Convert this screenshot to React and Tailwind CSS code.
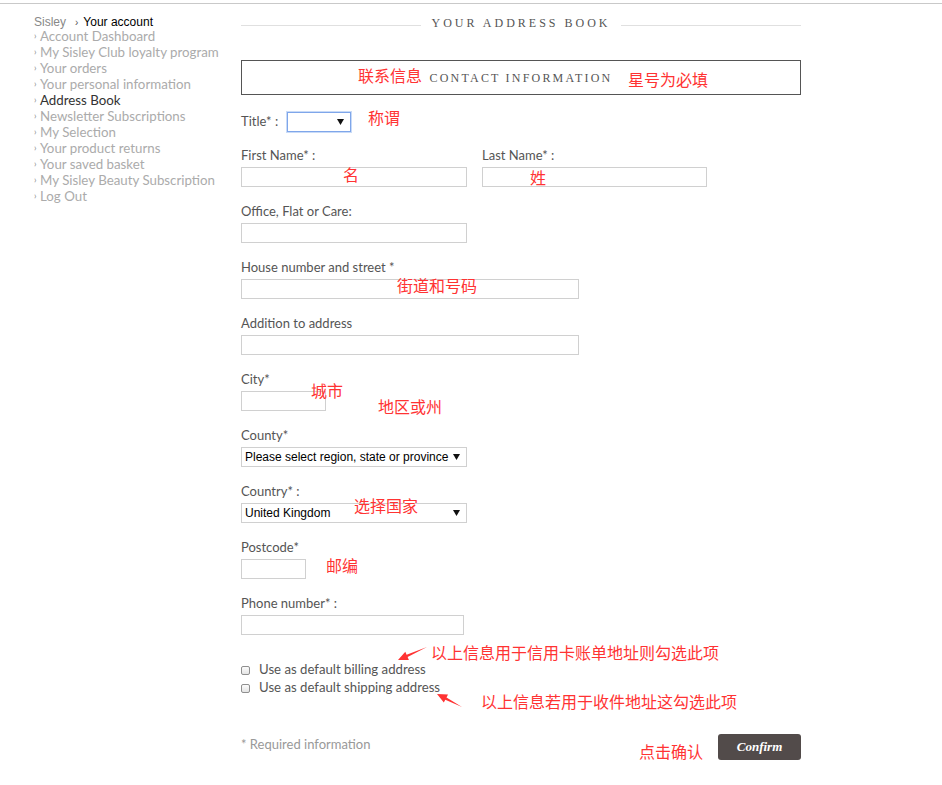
import React from "react";

const lato = { fontFamily: "Lato, 'Open Sans', sans-serif" };

function Label({ children }) {
  return (
    <div className="h-[16px] leading-[16px] text-[13px] text-[#555]" style={lato}>
      {children}
    </div>
  );
}

function Input({ w }) {
  return <div className={`mt-[4px] h-[20px] border border-[#d0d0d0] bg-white ${w}`} />;
}

function Arrow() {
  return (
    <svg width="7" height="6" viewBox="0 0 7 6" className="shrink-0">
      <path d="M0 0 L7 0 L3.5 6 Z" fill="#111" />
    </svg>
  );
}

function Select({ w, text, focus }) {
  return (
    <div
      className={`mt-[4px] h-[20px] ${w} flex items-center justify-between pl-[3px] pr-[6px] bg-white border ${
        focus ? "border-[#7fa6ea] shadow-[0_0_0_1px_#c9dbf7]" : "border-[#d0d0d0]"
      }`}
    >
      <span className="text-[12px] leading-[14px] text-black" style={{ fontFamily: "'Liberation Sans', Arial, sans-serif" }}>
        {text}
      </span>
      <Arrow />
    </div>
  );
}

function Field({ label, children }) {
  return (
    <div className="mb-[16px]">
      <Label>{label}</Label>
      {children}
    </div>
  );
}

function Note({ className, children }) {
  return (
    <div
      className={`absolute text-[16px] leading-[16px] text-[#f33] whitespace-nowrap ${className}`}
      style={{ fontFamily: "'Noto Sans CJK SC', 'Noto Sans', sans-serif" }}
    >
      {children}
    </div>
  );
}

function Checkbox({ label }) {
  return (
    <div className="h-[18px] flex items-center">
      <div className="w-[9px] h-[9px] rounded-[2px] border border-[#8f8f8f] bg-gradient-to-b from-[#fcfcfc] to-[#e4e4e4]" />
      <span className="ml-[9px] text-[13.2px] text-[#555]" style={lato}>
        {label}
      </span>
    </div>
  );
}

const menu = [
  ["Account Dashboard", false],
  ["My Sisley Club loyalty program", false],
  ["Your orders", false],
  ["Your personal information", false],
  ["Address Book", true],
  ["Newsletter Subscriptions", false],
  ["My Selection", false],
  ["Your product returns", false],
  ["Your saved basket", false],
  ["My Sisley Beauty Subscription", false],
  ["Log Out", false],
];

export default function App() {
  return (
    <div className="relative w-[942px] min-h-[785px] bg-white">
      <div className="pt-[3px]">
        <div className="h-px bg-[#c9c9c9]" />
      </div>
      <div className="flex">
        {/* Sidebar */}
        <div className="w-[241px] pl-[34px] pt-[13px]">
          <div className="h-[11px] leading-[11px] flex items-center text-[12px]" style={{ fontFamily: "'Liberation Sans', Arial, sans-serif" }}>
            <span className="text-[#888]">Sisley</span>
            <span className="ml-[9px] text-[10px] text-[#555]">›</span>
            <span className="ml-[5px] text-black">Your account</span>
          </div>
          {menu.map(([t, active]) => (
            <div key={t} className="h-[16px] leading-[16px] flex items-center text-[13.3px]" style={lato}>
              <span className="text-[9px] text-[#888] w-[6px]">›</span>
              <span className={active ? "text-[#333]" : "text-[#ababab]"}>{t}</span>
            </div>
          ))}
        </div>

        {/* Main */}
        <div className="w-[560px] pt-[11px]">
          <div className="h-[16px] flex items-center gap-[10px]">
            <div className="flex-1 h-px bg-[#e0e0e0] mt-[4px]" />
            <div
              className="text-[12px] tracking-[3px] text-[#555] uppercase"
              style={{ fontFamily: "'Liberation Serif', 'Times New Roman', serif" }}
            >
              Your Address Book
            </div>
            <div className="flex-1 h-px bg-[#e0e0e0] mt-[4px]" />
          </div>

          <div className="mt-[29px] h-[35px] border border-[#555] flex items-center justify-center">
            <span
              className="text-[12px] tracking-[2.2px] text-[#555] uppercase"
              style={{ fontFamily: "'Liberation Serif', 'Times New Roman', serif" }}
            >
              Contact Information
            </span>
          </div>

          <div className="mt-[17px] h-[20px] flex items-center">
            <span className="text-[13px] text-[#555]" style={lato}>Title* :</span>
            <div className="ml-[9px] -mt-[4px]">
              <Select w="w-[64px]" text="" focus />
            </div>
          </div>

          <div className="mt-[15px]">
            <div className="grid grid-cols-[241px_226px]">
              <Field label="First Name* :">
                <Input w="w-[226px]" />
              </Field>
              <Field label="Last Name* :">
                <Input w="w-[225px]" />
              </Field>
            </div>
            <Field label="Office, Flat or Care:">
              <Input w="w-[226px]" />
            </Field>
            <Field label="House number and street *">
              <Input w="w-[338px]" />
            </Field>
            <Field label="Addition to address">
              <Input w="w-[338px]" />
            </Field>
            <Field label="City*">
              <Input w="w-[85px]" />
            </Field>
            <Field label="County*">
              <Select w="w-[226px]" text="Please select region, state or province" />
            </Field>
            <Field label="Country* :">
              <Select w="w-[226px]" text="United Kingdom" />
            </Field>
            <Field label="Postcode*">
              <Input w="w-[65px]" />
            </Field>
            <div>
              <Label>Phone number* :</Label>
              <Input w="w-[223px]" />
            </div>
          </div>

          <div className="mt-[26px]">
            <Checkbox label="Use as default billing address" />
            <Checkbox label="Use as default shipping address" />
          </div>

          <div className="mt-[37px] flex items-center justify-between">
            <span className="text-[13px] text-[#999] -mt-[4px]" style={lato}>* Required information</span>
            <button
              className="w-[83px] h-[26px] rounded-[3px] bg-[#524b4a] text-white text-[13px] italic font-semibold"
              style={{ fontFamily: "'Liberation Serif', Georgia, serif" }}
            >
              Confirm
            </button>
          </div>
        </div>
      </div>

      {/* Annotations */}
      <Note className="left-[358px] top-[67px]">联系信息</Note>
      <Note className="left-[628px] top-[71px]">星号为必填</Note>
      <Note className="left-[368px] top-[109px]">称谓</Note>
      <Note className="left-[343px] top-[166px]">名</Note>
      <Note className="left-[530px] top-[169px]">姓</Note>
      <Note className="left-[397px] top-[277px]">街道和号码</Note>
      <Note className="left-[311px] top-[382px]">城市</Note>
      <Note className="left-[378px] top-[398px]">地区或州</Note>
      <Note className="left-[354px] top-[497px]">选择国家</Note>
      <Note className="left-[326px] top-[557px]">邮编</Note>
      <Note className="left-[431px] top-[644px]">以上信息用于信用卡账单地址则勾选此项</Note>
      <Note className="left-[481px] top-[693px]">以上信息若用于收件地址这勾选此项</Note>
      <Note className="left-[639px] top-[743px]">点击确认</Note>

      <svg className="absolute left-[390px] top-[640px]" width="50" height="30" viewBox="0 0 50 30">
        <polygon points="37,7 17.6,17 18.9,20 8,20 15.3,11.8 16.6,14.8" fill="#f33" />
      </svg>
      <svg className="absolute left-[430px] top-[685px]" width="40" height="30" viewBox="0 0 40 30">
        <polygon points="32,22 16.5,12.5 18,9.6 7,9 13.8,17.6 15.3,14.7" fill="#f33" />
      </svg>
    </div>
  );
}
